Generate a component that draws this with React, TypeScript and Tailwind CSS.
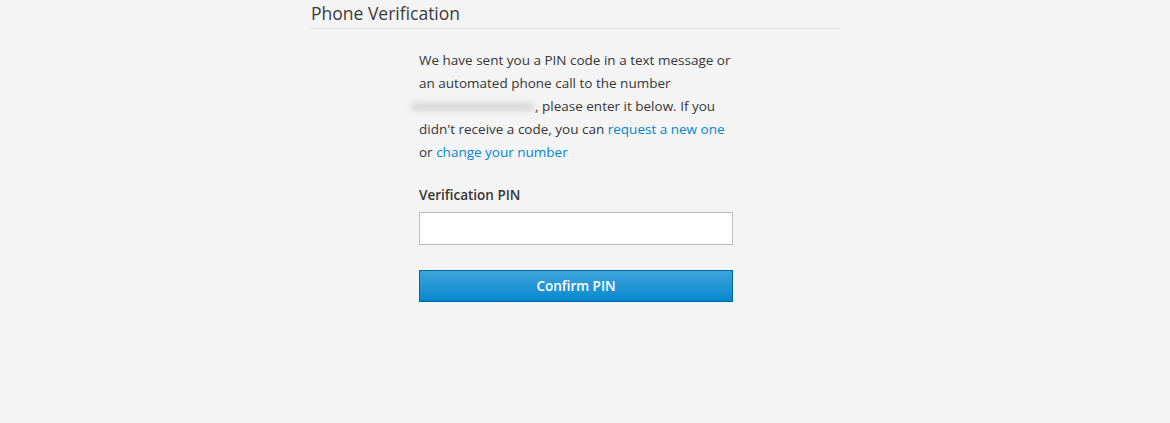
export default function App() {
    return (
        <div className="min-h-[423px] w-full bg-[#f4f4f4] font-['Open_Sans',sans-serif] text-[#363636]">
            <div className="ml-[311px] w-[529px]">
                <h1 className="h-[29px] border-b border-[#e2e2e2] pt-[1px] text-[17.5px] leading-[24px] font-normal text-[#3a3a3a]">
                    Phone Verification
                </h1>

                <div className="ml-[108px] w-[314px] pt-[20px]">
                    <p className="text-[13.5px] leading-[23px]">
                        We have sent you a PIN code in a text message or an automated phone call to the number{' '}
                        {/* redacted phone number */}
                        <span
                            aria-hidden
                            className="-ml-[8px] inline-block h-[8px] w-[124px] rounded-full bg-[#d6d6d6] align-middle blur-[3px]"
                        />
                        , please enter it below. If you didn't receive a code, you can{' '}
                        <a href="#" className="text-[#0088ce]">
                            request a new one
                        </a>{' '}
                        or{' '}
                        <a href="#" className="text-[#0088ce]">
                            change your number
                        </a>
                    </p>

                    <form className="mt-[21px]" onSubmit={(e) => e.preventDefault()}>
                        <label className="block text-[13.5px] leading-[20px] font-semibold">Verification PIN</label>
                        <input
                            type="text"
                            className="mt-[7px] block h-[33px] w-[314px] border border-[#bbbbbb] bg-white px-2 text-sm outline-none"
                        />
                        <button
                            type="submit"
                            className="mt-[25px] block h-[32px] w-[314px] border border-[#00659c] bg-gradient-to-b from-[#39a5dc] to-[#0088ce] text-[13.5px] font-semibold text-white"
                        >
                            Confirm PIN
                        </button>
                    </form>
                </div>
            </div>
        </div>
    );
}
